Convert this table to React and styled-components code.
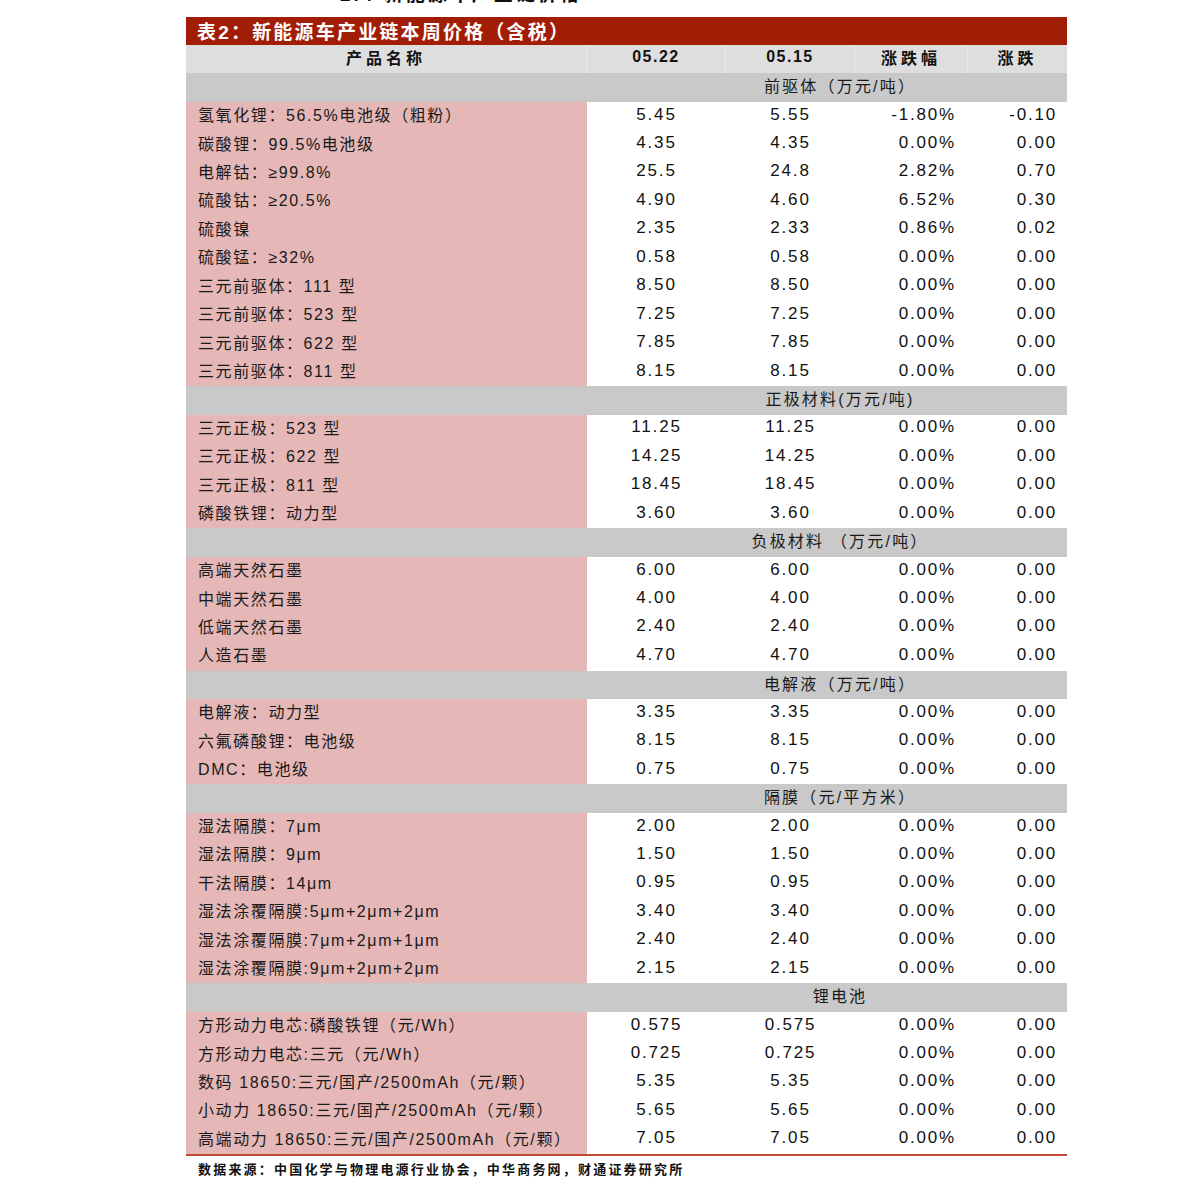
import React from 'react'
import styled, { createGlobalStyle } from 'styled-components'

const GlobalStyle = createGlobalStyle`
  html, body {
    margin: 0;
    padding: 0;
    background: #ffffff;
  }
  body {
    font-family: "Liberation Sans", "Noto Sans CJK SC", sans-serif;
    color: #111;
  }
`

const sections = [
  {
    title: '前驱体（万元/吨）',
    rows: [
      ['氢氧化锂：56.5%电池级（粗粉）', '5.45', '5.55', '-1.80%', '-0.10'],
      ['碳酸锂：99.5%电池级', '4.35', '4.35', '0.00%', '0.00'],
      ['电解钴：≥99.8%', '25.5', '24.8', '2.82%', '0.70'],
      ['硫酸钴：≥20.5%', '4.90', '4.60', '6.52%', '0.30'],
      ['硫酸镍', '2.35', '2.33', '0.86%', '0.02'],
      ['硫酸锰：≥32%', '0.58', '0.58', '0.00%', '0.00'],
      ['三元前驱体：111 型', '8.50', '8.50', '0.00%', '0.00'],
      ['三元前驱体：523 型', '7.25', '7.25', '0.00%', '0.00'],
      ['三元前驱体：622 型', '7.85', '7.85', '0.00%', '0.00'],
      ['三元前驱体：811 型', '8.15', '8.15', '0.00%', '0.00'],
    ],
  },
  {
    title: '正极材料(万元/吨)',
    rows: [
      ['三元正极：523 型', '11.25', '11.25', '0.00%', '0.00'],
      ['三元正极：622 型', '14.25', '14.25', '0.00%', '0.00'],
      ['三元正极：811 型', '18.45', '18.45', '0.00%', '0.00'],
      ['磷酸铁锂：动力型', '3.60', '3.60', '0.00%', '0.00'],
    ],
  },
  {
    title: '负极材料 （万元/吨）',
    rows: [
      ['高端天然石墨', '6.00', '6.00', '0.00%', '0.00'],
      ['中端天然石墨', '4.00', '4.00', '0.00%', '0.00'],
      ['低端天然石墨', '2.40', '2.40', '0.00%', '0.00'],
      ['人造石墨', '4.70', '4.70', '0.00%', '0.00'],
    ],
  },
  {
    title: '电解液（万元/吨）',
    rows: [
      ['电解液：动力型', '3.35', '3.35', '0.00%', '0.00'],
      ['六氟磷酸锂：电池级', '8.15', '8.15', '0.00%', '0.00'],
      ['DMC：电池级', '0.75', '0.75', '0.00%', '0.00'],
    ],
  },
  {
    title: '隔膜（元/平方米）',
    rows: [
      ['湿法隔膜：7μm', '2.00', '2.00', '0.00%', '0.00'],
      ['湿法隔膜：9μm', '1.50', '1.50', '0.00%', '0.00'],
      ['干法隔膜：14μm', '0.95', '0.95', '0.00%', '0.00'],
      ['湿法涂覆隔膜:5μm+2μm+2μm', '3.40', '3.40', '0.00%', '0.00'],
      ['湿法涂覆隔膜:7μm+2μm+1μm', '2.40', '2.40', '0.00%', '0.00'],
      ['湿法涂覆隔膜:9μm+2μm+2μm', '2.15', '2.15', '0.00%', '0.00'],
    ],
  },
  {
    title: '锂电池',
    rows: [
      ['方形动力电芯:磷酸铁锂（元/Wh）', '0.575', '0.575', '0.00%', '0.00'],
      ['方形动力电芯:三元（元/Wh）', '0.725', '0.725', '0.00%', '0.00'],
      ['数码 18650:三元/国产/2500mAh（元/颗）', '5.35', '5.35', '0.00%', '0.00'],
      ['小动力 18650:三元/国产/2500mAh（元/颗）', '5.65', '5.65', '0.00%', '0.00'],
      ['高端动力 18650:三元/国产/2500mAh（元/颗）', '7.05', '7.05', '0.00%', '0.00'],
    ],
  },
]

const Page = styled.div`
  padding-left: 186px;
  width: 881px;
`

const Cutoff = styled.div`
  height: 6px;
  overflow: hidden;
  margin-bottom: 11px;
  padding-left: 154px;
`

const CutoffText = styled.div`
  margin-top: -16px;
  line-height: 22px;
  font-size: 19px;
  font-weight: 700;
  letter-spacing: 3px;
`

const TitleBar = styled.div`
  height: 28px;
  box-sizing: border-box;
  padding: 0 0 2px 11px;
  background: #a21d05;
  color: #ffffff;
  display: flex;
  align-items: center;
  font-size: 19px;
  font-weight: 700;
  letter-spacing: 2.2px;
`

const Grid = styled.div`
  display: grid;
  grid-template-columns: 401px 139px 129px 113px 99px;
  grid-auto-rows: 28.45px;
  border-bottom: 2px solid #c04a34;
`

const HeadCell = styled.div`
  background: #dedede;
  display: flex;
  align-items: center;
  justify-content: center;
  padding-bottom: 5px;
  font-size: 16px;
  font-weight: 700;
  letter-spacing: ${p => (p.$cjk ? '4px' : '1.5px')};
  border-right: ${p => (p.$last ? 'none' : '1px solid #e9e9e9')};
`

const SectionRow = styled.div`
  grid-column: 1 / -1;
  background: #c9c9c9;
  display: grid;
  grid-template-columns: 401px 1fr;
  align-items: center;
  padding-bottom: 6px;
`

const SectionLabel = styled.div`
  grid-column: 2;
  text-align: center;
  padding-left: 26px;
  font-size: 16px;
  letter-spacing: 2.2px;
  color: #1a1a1a;
`

const NameCell = styled.div`
  background: #e5b7b6;
  display: flex;
  align-items: center;
  padding: 0 0 4px 12px;
  font-size: 16px;
  letter-spacing: 1.6px;
  white-space: nowrap;
  color: #1a1a1a;
`

const ValueCell = styled.div`
  display: flex;
  align-items: center;
  justify-content: ${p => (p.$right ? 'flex-end' : 'center')};
  padding-right: ${p => p.$pad || 0}px;
  padding-bottom: 3px;
  font-size: 17px;
  letter-spacing: 1.8px;
  color: #111;
`

const Source = styled.div`
  padding: 3px 0 0 12px;
  font-size: 13px;
  font-weight: 700;
  letter-spacing: 2.2px;
  color: #111;
`

const App = () => {
  return (
    <Page>
      <GlobalStyle />
      <Cutoff>
        <CutoffText>2.4 新能源车产业链价格</CutoffText>
      </Cutoff>
      <TitleBar>表2：新能源车产业链本周价格（含税）</TitleBar>
      <Grid>
        <HeadCell $cjk>产品名称</HeadCell>
        <HeadCell>05.22</HeadCell>
        <HeadCell>05.15</HeadCell>
        <HeadCell $cjk>涨跌幅</HeadCell>
        <HeadCell $cjk $last>涨跌</HeadCell>
        {sections.map(section => (
          <React.Fragment key={section.title}>
            <SectionRow>
              <SectionLabel>{section.title}</SectionLabel>
            </SectionRow>
            {section.rows.map(row => (
              <React.Fragment key={row[0]}>
                <NameCell>{row[0]}</NameCell>
                <ValueCell>{row[1]}</ValueCell>
                <ValueCell>{row[2]}</ValueCell>
                <ValueCell $right $pad={12}>{row[3]}</ValueCell>
                <ValueCell $right $pad={10}>{row[4]}</ValueCell>
              </React.Fragment>
            ))}
          </React.Fragment>
        ))}
      </Grid>
      <Source>数据来源：中国化学与物理电源行业协会，中华商务网，财通证券研究所</Source>
    </Page>
  )
}

export default App
